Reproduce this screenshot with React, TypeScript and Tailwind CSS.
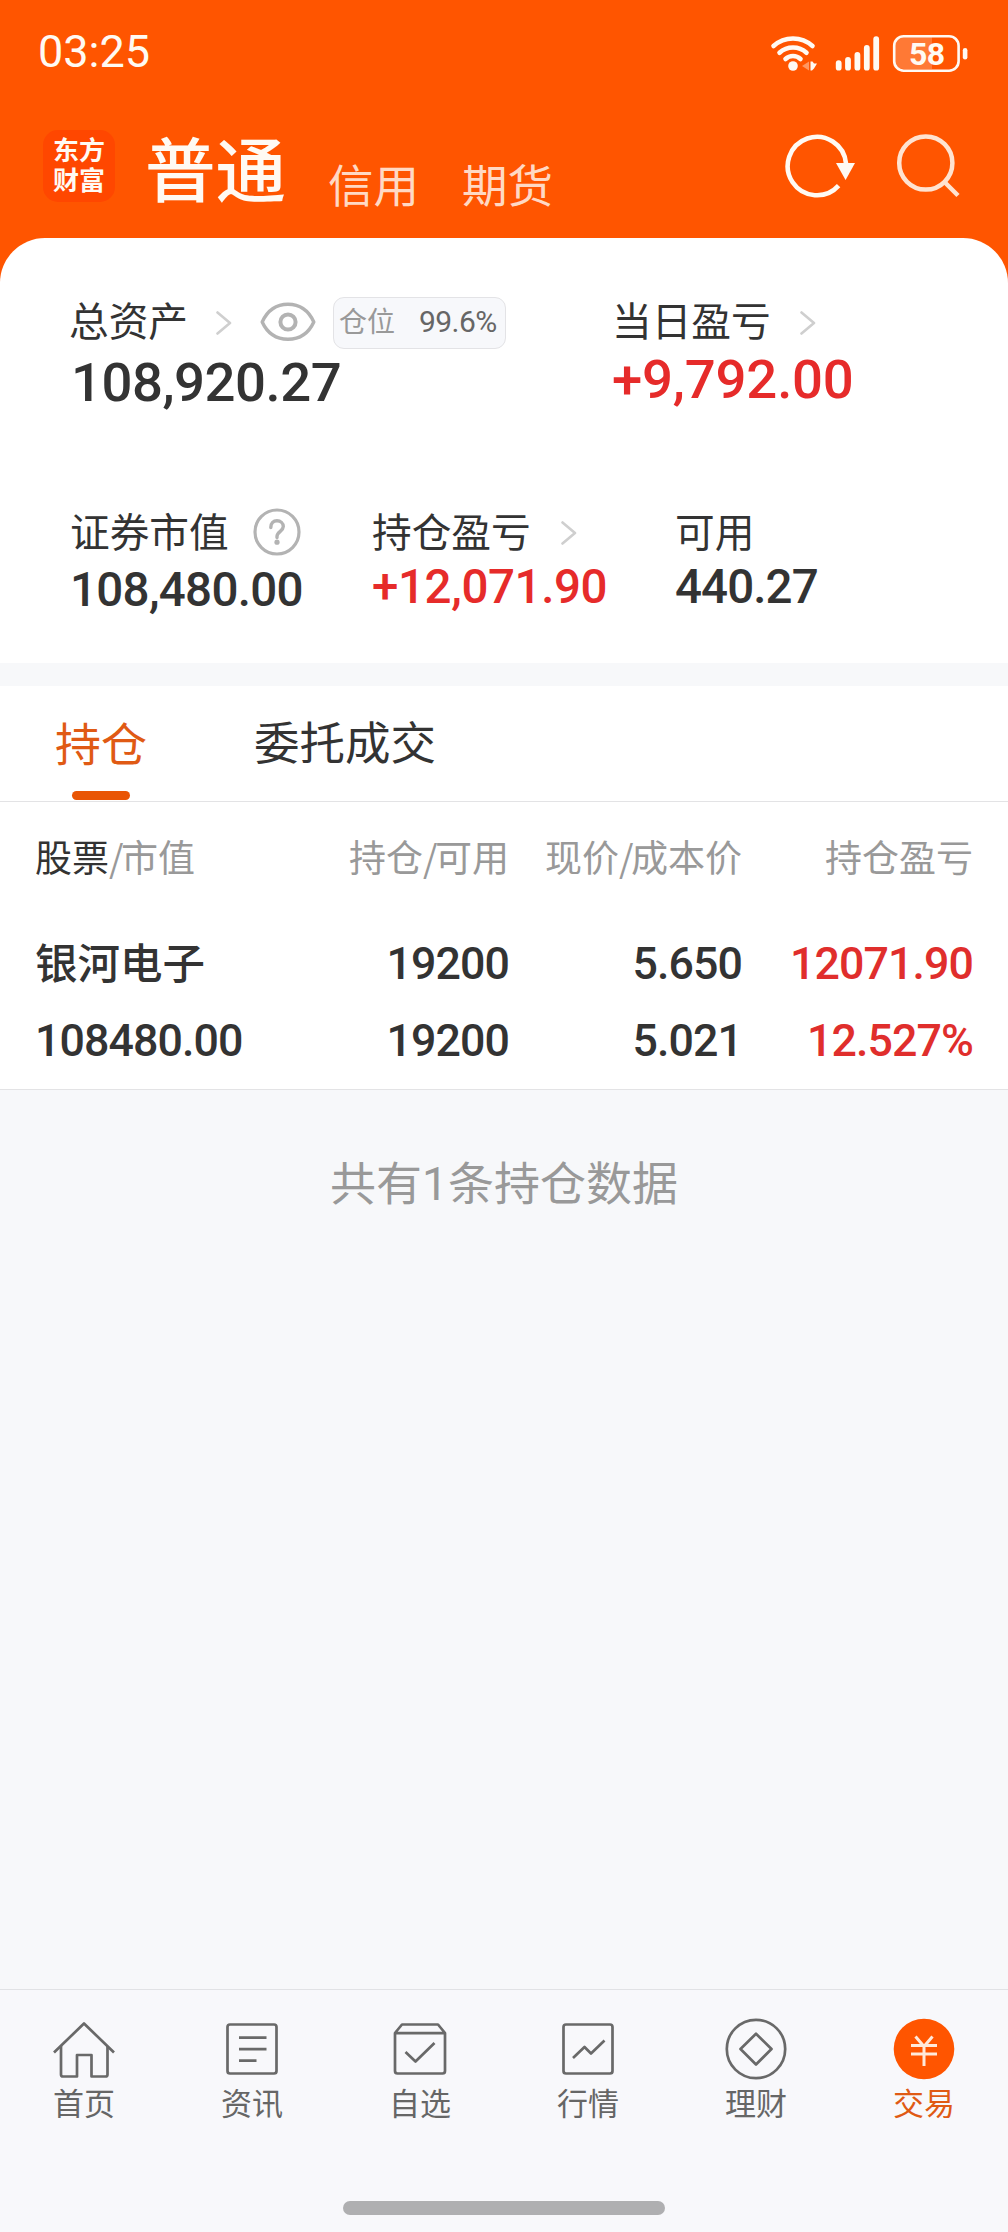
import React from "react";

const NUM = "font-['Roboto','Noto_Sans_CJK_SC',sans-serif] whitespace-nowrap";

function Chevron({ className }: { className: string }) {
  return (
    <svg viewBox="0 0 16 24" className={`h-6 w-4 shrink-0 ${className}`} fill="none" stroke="#cfcfcf" strokeWidth="2.6" strokeLinecap="round" strokeLinejoin="round">
      <path d="M1.5 1.5 14 12 1.5 22.5" />
    </svg>
  );
}

function StatusBar() {
  return (
    <div className="flex h-[104px] items-center pl-[38px] pr-[39px] text-[#fffaf3]">
      <span className={`${NUM} text-[45px] leading-[104px]`}>03:25</span>
      <svg viewBox="0 0 200 40" className="ml-auto h-10 w-[200px]" fill="none">
        <g stroke="currentColor" strokeWidth="4.6" strokeLinecap="round">
          <path d="M4.5 14.500a29 29 0 0 1 39 0" transform="translate(0 -.5)" />
          <path d="M10.500 20.700a20 20 0 0 1 27 0" />
          <path d="M16.500 27a11 11 0 0 1 15 0" />
        </g>
        <circle cx="24" cy="34" r="4.8" fill="currentColor" />
        <path d="M40 29.500v9L33 34z" fill="currentColor" opacity=".4" />
        <path d="M41.500 29.500h2l1.500 2h3l-3 5-2 2h-1.500z" fill="currentColor" />
        <g stroke="currentColor" strokeWidth="5.8" strokeLinecap="round">
          <path d="M69.7 31.200v4.500M79 27.800v7.900M88.400 23v12.700M97.800 16v19.700M107.200 7.200v28.500" />
        </g>
        <path d="M135 5H163V37H135Q125 37 125 28V13Q125 5 135 5Z" fill="currentColor" opacity=".22" />
        <rect x="125.200" y="4.200" width="64.400" height="34.500" rx="9.500" stroke="currentColor" strokeWidth="2.600" />
        <rect x="193.800" y="16" width="4.600" height="11.500" rx="2.300" fill="currentColor" />
        <text x="157.800" y="33" textAnchor="middle" fill="currentColor" className="font-['Roboto',sans-serif] text-[32px] font-bold tracking-[-0.6px]">58</text>
      </svg>
    </div>
  );
}

function TopBar() {
  return (
    <div className="flex h-[134px] items-start pl-[43px] text-[#fffaf3]">
      <div className="mt-[26px] flex h-[72px] w-[72px] flex-col items-center rounded-[15px] bg-[#ff4700] pt-[4px] text-[26px] font-bold leading-[30px]">
        <span>东方</span>
        <span>财富</span>
      </div>
      <span className="ml-[30px] mt-[17px] text-[70.5px] font-medium leading-[90px]">普通</span>
      <span className="ml-[42px] mt-[46px] text-[45.5px] leading-[66px] text-[#ffd9c4]">信用</span>
      <span className="ml-[43px] mt-[46px] text-[45.5px] leading-[66px] text-[#ffd9c4]">期货</span>
      <svg viewBox="0 0 72 66" className="ml-auto mt-[28px] h-[66px] w-[72px]" fill="none">
        <path d="M62 31.5A29.2 29.2 0 1 0 54.6 53.6" stroke="currentColor" strokeWidth="4.6" />
        <path d="M52 31h19L61.6 48z" fill="currentColor" />
      </svg>
      <svg viewBox="0 0 66 66" className="ml-[40px] mr-[46px] mt-[28px] h-[66px] w-[66px]" fill="none" stroke="#ffe3d0" strokeWidth="4.500">
        <circle cx="29.800" cy="31" r="26.600" />
        <path d="M48.500 50 62 63.500" />
      </svg>
    </div>
  );
}

function Summary() {
  return (
    <div className="bg-[#ff5500]">
      <section className="h-[425px] rounded-t-[45px] bg-white pt-[50px] text-[#333]">
        <div className="flex h-[64px] items-center pl-[69px]">
          <div className="flex w-[543px] items-center">
            <span className="-mt-[3px] text-[39.7px] leading-[60px]">总资产</span>
            <Chevron className="ml-[28px] mt-[6px]" />
            <svg viewBox="0 0 56 42" className="ml-[28px] mt-[3px] h-[42px] w-14" fill="none" stroke="#b3b3b3" strokeWidth="3.4">
              <path d="M2.2 21C7 10.500 15 3.300 28 3.300S49 10.500 53.800 21C49 31.500 41 38.200 28 38.200S7 31.500 2.200 21Z" strokeLinejoin="round" />
              <circle cx="28" cy="21" r="7.600" strokeWidth="4" />
            </svg>
            <div className="ml-[17px] mt-[6px] flex h-[52px] w-[173px] items-center rounded-[11px] border border-[#e3e3e6] bg-[#f7f8fb]">
              <span className="-mt-[6px] ml-[5px] text-[28px] leading-[46px] text-[#999]">仓位</span>
              <span className={`${NUM} -mt-[2px] ml-[24px] text-[30px] leading-[46px] tracking-[-0.6px] text-[#666]`}>99.6%</span>
            </div>
          </div>
          <span className="-mt-[3px] text-[39.7px] leading-[60px]">当日盈亏</span>
          <Chevron className="ml-[29px] mt-[6px]" />
        </div>
        <div className="flex h-[60px] pl-[71px] font-medium">
          <span className={`${NUM} w-[541px] text-[54.5px] leading-[61px] tracking-[-0.5px]`}>108,920.27</span>
          <span className={`${NUM} text-[54.5px] leading-[55px] tracking-[-0.2px] text-[#e62b2a]`}>+9,792.00</span>
        </div>
        <div className="mt-[88px] flex h-[60px] items-center pl-[70px]">
          <div className="flex w-[302px] items-center">
            <span className="text-[39.7px] leading-[60px]">证券市值</span>
            <svg viewBox="0 0 48 48" className="ml-[24px] mt-[4px] h-12 w-12" fill="none" stroke="#b3b3b3" strokeWidth="3.2">
              <circle cx="24" cy="24" r="22" />
              <path d="M17.800 19.500C17.800 15 20.500 12.800 24 12.800S30.300 15.200 30.300 18.600C30.300 23.200 24 23.500 24 28.500V29.500" strokeWidth="3.400" strokeLinecap="round" />
              <circle cx="24" cy="34.200" r="2.600" fill="#b3b3b3" stroke="none" />
            </svg>
          </div>
          <div className="flex w-[303px] items-center">
            <span className="text-[39.7px] leading-[60px]">持仓盈亏</span>
            <Chevron className="ml-[30px] mt-[5px]" />
          </div>
          <span className="text-[39.7px] leading-[60px]">可用</span>
        </div>
        <div className="flex h-[54px] pl-[70px] font-medium">
          <span className={`${NUM} w-[302px] text-[47.5px] leading-[60px] tracking-[-0.7px]`}>108,480.00</span>
          <span className={`${NUM} w-[303px] text-[47.5px] leading-[54px] tracking-[-0.4px] text-[#e62b2a]`}>+12,071.90</span>
          <span className={`${NUM} text-[47.5px] leading-[54px] tracking-[-0.9px]`}>440.27</span>
        </div>
      </section>
    </div>
  );
}

function Tabs() {
  return (
    <div className="flex h-[116px] border-b border-[#e3e3e5] bg-white pl-[55px]">
      <div className="flex w-[199px] flex-col">
        <span className="h-[105px] text-[46px] leading-[111px] text-[#e05a14]">持仓</span>
        <span className="ml-[17px] h-[9px] w-[58px] rounded-full bg-[#e95504]" />
      </div>
      <span className="text-[45.5px] leading-[108px] text-[#333]">委托成交</span>
    </div>
  );
}

const COLS = "grid grid-cols-[330px_144px_233px_231px] pl-[35px]";

function Slash() {
  return <span className="tracking-[-2.5px]">/</span>;
}

function Holdings() {
  return (
    <section className="h-[288px] border-b border-[#e3e3e5] bg-white text-[#333]">
      <div className={`${COLS} h-[113px] text-[37px] leading-[108px] text-[#999]`}>
        <span><span className="text-[#333]">股票</span><Slash />市值</span>
        <span className="flex justify-end whitespace-nowrap">持仓<Slash />可用</span>
        <span className="flex justify-end whitespace-nowrap">现价<Slash />成本价</span>
        <span className="flex justify-end whitespace-nowrap">持仓盈亏</span>
      </div>
      <div className={`${COLS} h-[96px] text-[44.700px] font-medium leading-[98px] tracking-[-0.9px]`}>
        <span className="text-[42.5px] leading-[92px] tracking-normal">银河电子</span>
        <span className={`${NUM} flex justify-end`}>19200</span>
        <span className={`${NUM} flex justify-end`}>5.650</span>
        <span className={`${NUM} flex justify-end text-[#e02e2c]`}>12071.90</span>
      </div>
      <div className={`${COLS} h-[60px] text-[44.700px] font-medium leading-[60px] tracking-[-0.9px]`}>
        <span className={NUM}>108480.00</span>
        <span className={`${NUM} flex justify-end`}>19200</span>
        <span className={`${NUM} flex justify-end`}>5.021</span>
        <span className={`${NUM} flex justify-end text-[#e02e2c]`}>12.527%</span>
      </div>
    </section>
  );
}

const ICONS: Record<string, React.ReactNode> = {
  首页: (
    <>
      <path d="M2 34.500 32 5.500 62 34.500" />
      <path d="M9 28v28.500q0 2 2 2H25V37h14.500v21.500H53.500q2 0 2-2V28" />
    </>
  ),
  资讯: (
    <>
      <rect x="7.500" y="6.500" width="49" height="49" rx="2.500" />
      <path d="M19 19.700h27.500M19 31.200h27.500M19 42.700h17.500" />
    </>
  ),
  自选: (
    <>
      <path d="M7 15 14 6.500H50L57 15V53q0 2.500-2.500 2.500H9.500Q7 55.500 7 53ZM7 15.200H57" />
      <path d="M17.500 34 27.500 43.500 46.500 25" />
    </>
  ),
  行情: (
    <>
      <rect x="7.500" y="6.500" width="49" height="49" rx="2.500" />
      <path d="M17 40 28.500 29 35 35.500 48.500 22.500" />
    </>
  ),
  理财: (
    <>
      <circle cx="32" cy="31" r="29.200" />
      <path d="M32 15.700 47.500 31 32 46.500 16.500 31Z" />
    </>
  ),
  交易: (
    <>
      <circle cx="32" cy="31" r="30.300" fill="#ff5500" stroke="none" />
      <path d="M23.500 18.500 32 28.500 40.500 18.500M19 27.500H45M19 36H45M32 28V48" stroke="#ffe9da" strokeWidth="3" />
    </>
  ),
};

function BottomNav() {
  return (
    <nav className="h-[243px] border-t border-[#e1e2e5] bg-[#f8f8fb]">
      <div className="grid h-[211px] grid-cols-6">
        {Object.entries(ICONS).map(([label, icon]) => (
          <div key={label} className={`flex flex-col items-center pt-[28px] ${label === "交易" ? "text-[#e05a14]" : "text-[#666]"}`}>
            <svg viewBox="0 0 64 64" className="h-16 w-16" fill="none" stroke="#696969" strokeWidth="2.700" strokeLinejoin="round">
              {icon}
            </svg>
            <span className="text-[31px] leading-[40px]">{label}</span>
          </div>
        ))}
      </div>
      <div className="mx-auto h-[14px] w-[322px] rounded-full bg-[#afafb1]" />
    </nav>
  );
}

export default function App() {
  return (
    <div className="flex h-[2232px] w-[1008px] flex-col overflow-hidden bg-[#f7f8fa] font-['Noto_Sans_CJK_SC',sans-serif]">
      <header className="bg-[#ff5500]">
        <StatusBar />
        <TopBar />
      </header>
      <Summary />
      <div className="mt-[23px]">
        <Tabs />
        <Holdings />
      </div>
      <p className="mt-[58px] text-center text-[46px] leading-[64px] text-[#999]">
        共有<span className={NUM}>1</span>条持仓数据
      </p>
      <div className="mt-auto">
        <BottomNav />
      </div>
    </div>
  );
}
